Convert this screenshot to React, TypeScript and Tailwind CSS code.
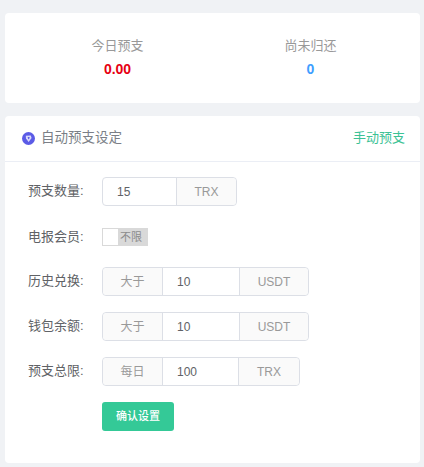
import { ReactNode } from "react";

function Addon({ children, className }: { children: ReactNode; className: string }) {
    return (
        <div className={`flex items-center justify-center bg-[#fafafa] text-[#999999] ${className}`}>
            {children}
        </div>
    );
}

function Row({ label, children }: { label: string; children: ReactNode }) {
    return (
        <div className="flex items-center">
            <label className="w-[74px] pb-[2px] text-[13px] text-[#606266] leading-none">{label}</label>
            {children}
        </div>
    );
}

function InputGroup({ prefix, value, unit, inputW, unitW }: { prefix?: string; value: string; unit: string; inputW: string; unitW: string }) {
    return (
        <div className="flex h-[29px] rounded-[4px] border border-[#dcdfe6] text-[12px]">
            {prefix && <Addon className="w-[60px] rounded-l-[4px] border-r border-[#dcdfe6]">{prefix}</Addon>}
            <div className={`flex items-center pl-[14px] text-[#606266] ${inputW}`}>{value}</div>
            <Addon className={`rounded-r-[4px] border-l border-[#dcdfe6] ${unitW}`}>{unit}</Addon>
        </div>
    );
}

export default function App() {
    return (
        <div className="h-[467px] w-[424px] overflow-hidden bg-[#f0f2f5] pl-[5px] pr-[4px] pt-[13px] font-['Liberation_Sans','Noto_Sans_CJK_SC',sans-serif]">
            <div className="flex h-[90px] rounded-[4px] bg-white pl-[16px] pr-[13px]">
                <div className="flex flex-1 flex-col items-center pt-[24px]">
                    <span className="text-[13px] leading-[18px] text-[#999999]">今日预支</span>
                    <span className="mt-[6px] text-[14px] font-bold leading-[16px] text-[#e60012]">0.00</span>
                </div>
                <div className="flex flex-1 flex-col items-center pt-[24px]">
                    <span className="text-[13px] leading-[18px] text-[#999999]">尚未归还</span>
                    <span className="mt-[6px] text-[14px] font-bold leading-[16px] text-[#409eff]">0</span>
                </div>
            </div>

            <div className="mt-[13px] h-[347px] rounded-[4px] bg-white">
                <div className="flex h-[46px] items-center border-b border-[#ebeef5] pl-[17px] pr-[15px]">
                    <svg width="13" height="13" viewBox="0 0 13 13" className="mr-[6px]">
                        <circle cx="6.5" cy="6.5" r="6.5" fill="#5b5be6" />
                        <path d="M3.8 3.8 L8.8 3.6 L9.6 6 L6.6 10 L4 6.4 Z" fill="#d9d9fa" />
                        <path d="M5.6 5 L7.6 5 L7.4 6.6 L6.4 7.4 Z" fill="#5b5be6" />
                    </svg>
                    <span className="text-[13.5px] text-[#7b7f87]">自动预支设定</span>
                    <span className="ml-auto pb-[1px] text-[13px] text-[#3cc295]">手动预支</span>
                </div>

                <div className="flex flex-col pl-[23px] pt-[15px]">
                    <Row label="预支数量:">
                        <InputGroup value="15" unit="TRX" inputW="w-[73px]" unitW="w-[60px]" />
                    </Row>
                    <div className="mt-[22px]">
                        <Row label="电报会员:">
                            <div className="flex h-[18px] w-[46px] items-center bg-[#d9d9d9] pl-[1px]">
                                <div className="h-[16px] w-[15px] bg-white" />
                                <span className="ml-[2px] text-[11px] text-[#8c8c8c]">不限</span>
                            </div>
                        </Row>
                    </div>
                    <div className="mt-[21px]">
                        <Row label="历史兑换:">
                            <InputGroup prefix="大于" value="10" unit="USDT" inputW="w-[76px]" unitW="w-[69px]" />
                        </Row>
                    </div>
                    <div className="mt-[16px]">
                        <Row label="钱包余额:">
                            <InputGroup prefix="大于" value="10" unit="USDT" inputW="w-[76px]" unitW="w-[69px]" />
                        </Row>
                    </div>
                    <div className="mt-[16px]">
                        <Row label="预支总限:">
                            <InputGroup prefix="每日" value="100" unit="TRX" inputW="w-[75px]" unitW="w-[61px]" />
                        </Row>
                    </div>
                    <button className="ml-[74px] mt-[16px] h-[29px] w-[72px] rounded-[3px] bg-[#34c997] text-[11px] font-medium text-white">
                        确认设置
                    </button>
                </div>
            </div>
        </div>
    );
}
